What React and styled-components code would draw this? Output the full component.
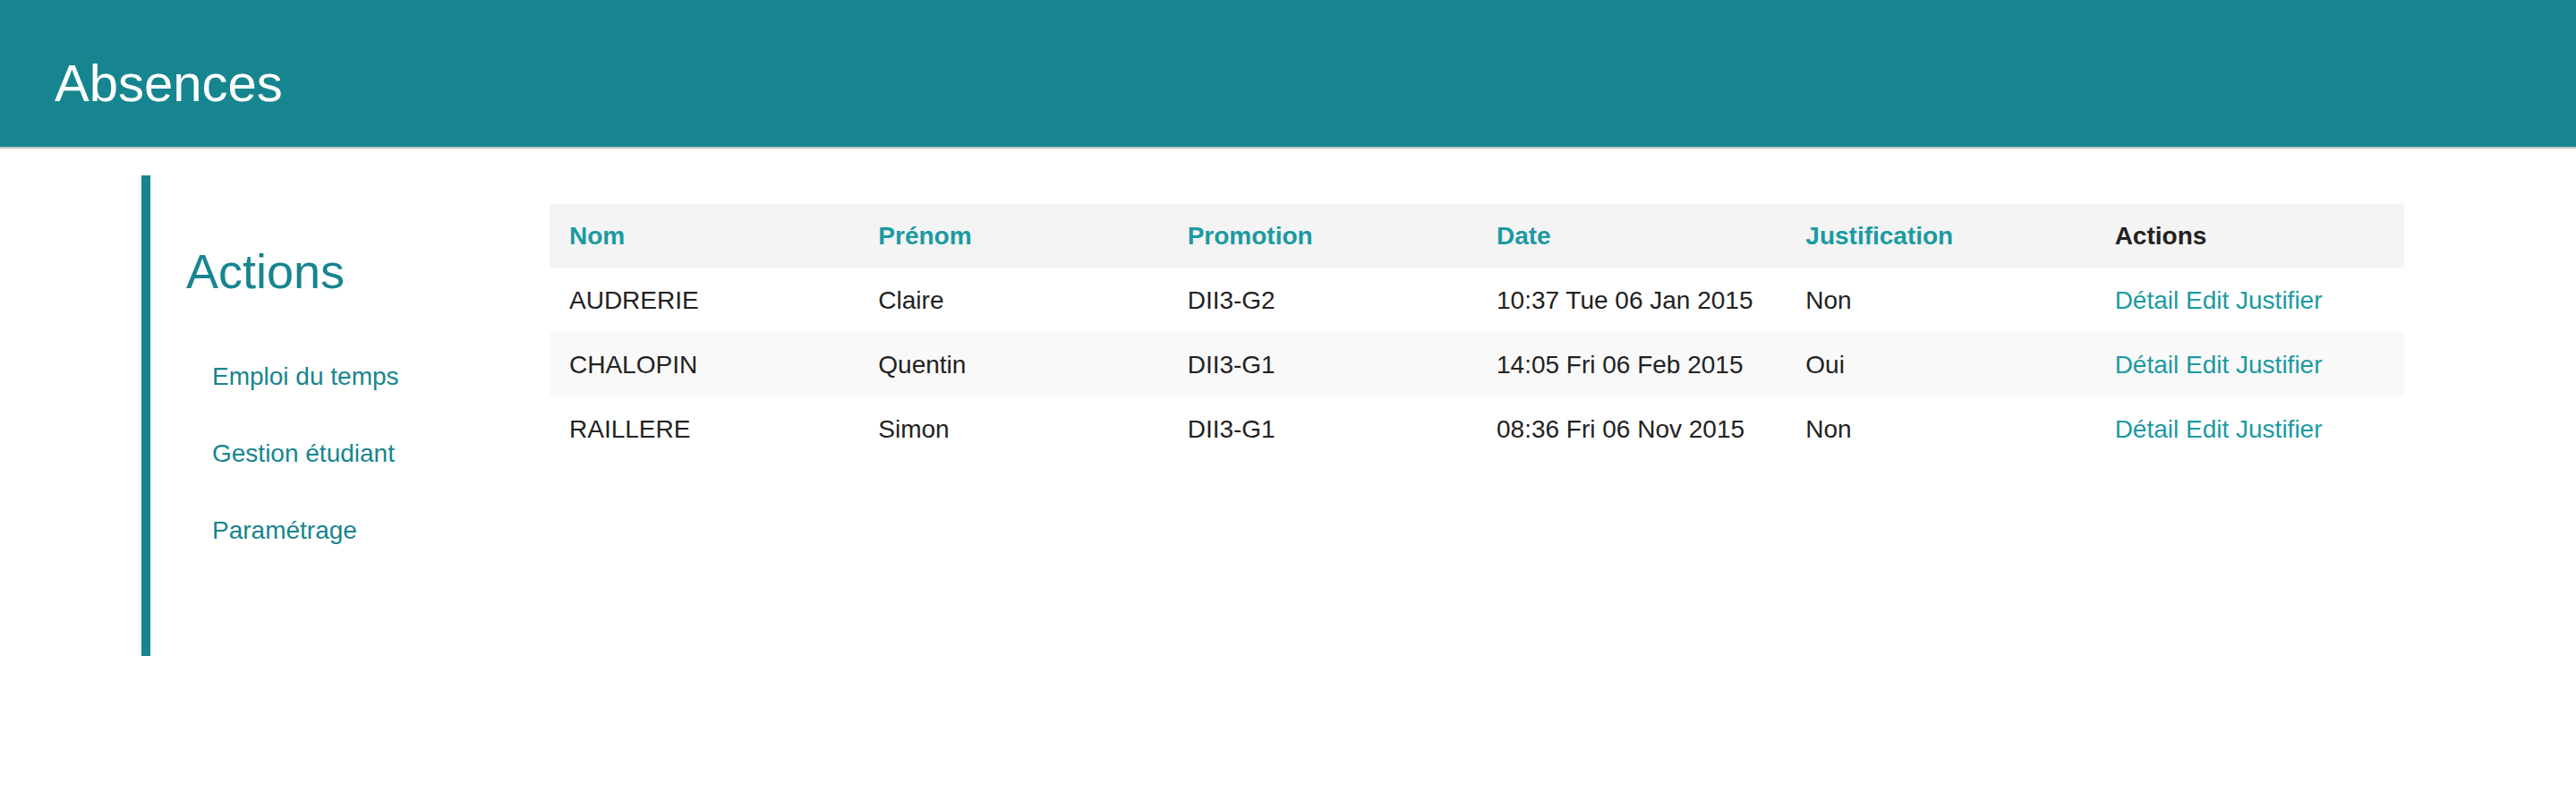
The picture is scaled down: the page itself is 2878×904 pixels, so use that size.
import React from 'react';
import styled, { createGlobalStyle, css } from 'styled-components';

const teal = '#17858f';
const tealLight = '#1b9aa2';

const GlobalStyle = createGlobalStyle`
  html, body {
    margin: 0;
    padding: 0;
    background: #fff;
    font-family: "Liberation Sans", Arial, Helvetica, sans-serif;
    color: #222;
  }
`;

const absences = [
  { nom: 'AUDRERIE', prenom: 'Claire', promotion: 'DII3-G2', date: '10:37 Tue 06 Jan 2015', justification: 'Non' },
  { nom: 'CHALOPIN', prenom: 'Quentin', promotion: 'DII3-G1', date: '14:05 Fri 06 Feb 2015', justification: 'Oui' },
  { nom: 'RAILLERE', prenom: 'Simon', promotion: 'DII3-G1', date: '08:36 Fri 06 Nov 2015', justification: 'Non' },
];

const columns = ['Nom', 'Prénom', 'Promotion', 'Date', 'Justification'];

const App = () => {
  return (
    <>
      <GlobalStyle />
      <Header>
        <Title>Absences</Title>
      </Header>
      <Main>
        <Sidebar>
          <SidebarTitle>Actions</SidebarTitle>
          <Menu>
            <MenuItem><MenuLink href="#">Emploi du temps</MenuLink></MenuItem>
            <MenuItem><MenuLink href="#">Gestion étudiant</MenuLink></MenuItem>
            <MenuItem><MenuLink href="#">Paramétrage</MenuLink></MenuItem>
          </Menu>
        </Sidebar>
        <Content>
          <Table>
            <thead>
              <HeadRow>
                {columns.map(col => (
                  <HeadCell key={col} sortable>{col}</HeadCell>
                ))}
                <HeadCell>Actions</HeadCell>
              </HeadRow>
            </thead>
            <tbody>
              {absences.map((row, i) => (
                <Row key={row.nom} striped={i % 2 === 1}>
                  <Cell>{row.nom}</Cell>
                  <Cell>{row.prenom}</Cell>
                  <Cell>{row.promotion}</Cell>
                  <Cell>{row.date}</Cell>
                  <Cell>{row.justification}</Cell>
                  <Cell>
                    <ActionLink href="#">Détail</ActionLink>{' '}
                    <ActionLink href="#">Edit</ActionLink>{' '}
                    <ActionLink href="#">Justifier</ActionLink>
                  </Cell>
                </Row>
              ))}
            </tbody>
          </Table>
        </Content>
      </Main>
    </>
  );
};

export default App;

const Header = styled.header`
  height: 164px;
  background: ${teal};
  border-bottom: 2px solid #c4c4c4;
  padding-left: 61px;
`;

const Title = styled.h1`
  margin: 0;
  padding-top: 64px;
  font-size: 58px;
  line-height: 58px;
  font-weight: 400;
  color: #fff;
`;

const Main = styled.main`
  display: flex;
  align-items: flex-start;
  padding: 30px 0 0 158px;
`;

const Sidebar = styled.aside`
  box-sizing: border-box;
  width: 456px;
  height: 537px;
  flex-shrink: 0;
  border-left: 10px solid ${teal};
  padding-left: 40px;
`;

const SidebarTitle = styled.h2`
  margin: 80px 0 0;
  font-size: 54px;
  line-height: 54px;
  font-weight: 400;
  color: ${teal};
`;

const Menu = styled.ul`
  list-style: none;
  margin: 77px 0 0;
  padding: 0 0 0 29px;
  display: flex;
  flex-direction: column;
  gap: 58px;
`;

const MenuItem = styled.li`
  font-size: 28px;
  line-height: 28px;
`;

const MenuLink = styled.a`
  color: ${teal};
  text-decoration: none;
`;

const Content = styled.section`
  margin-top: 32px;
  width: 2072px;
`;

const Table = styled.table`
  width: 100%;
  table-layout: fixed;
  border-collapse: collapse;
  font-size: 28px;
`;

const HeadRow = styled.tr`
  height: 71px;
  background: #f4f4f4;
`;

const HeadCell = styled.th`
  padding: 0 22px;
  text-align: left;
  font-weight: 700;
  line-height: 71px;
  color: #222;
  white-space: nowrap;

  ${props => props.sortable && css`
    color: ${tealLight};
  `}
`;

const Row = styled.tr`
  height: 72px;
  background: #fff;

  ${props => props.striped && css`
    background: #f9f9f9;
  `}
`;

const Cell = styled.td`
  padding: 2px 22px 0;
  line-height: 70px;
  color: #222;
  white-space: nowrap;
`;

const ActionLink = styled.a`
  color: ${tealLight};
  text-decoration: none;
`;
